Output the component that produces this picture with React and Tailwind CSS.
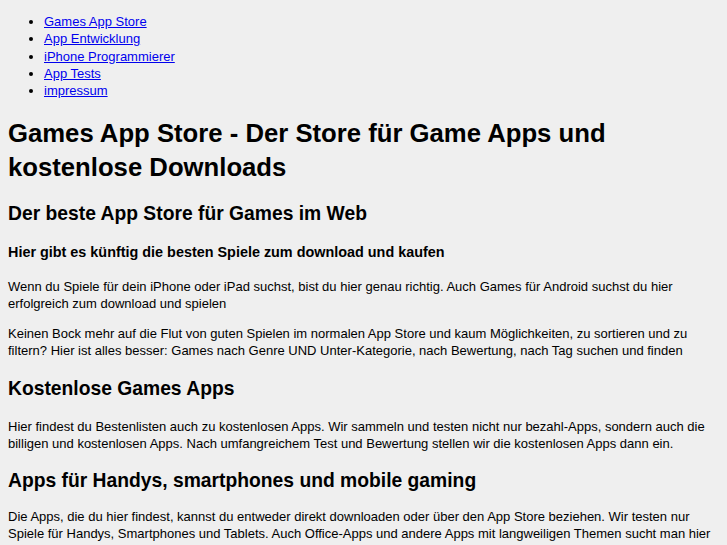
export default function App() {
  const links = [
    "Games App Store",
    "App Entwicklung",
    "iPhone Programmierer",
    "App Tests",
    "impressum",
  ];

  return (
    <div className="min-h-screen bg-[#efefef] p-2 text-[13px] leading-[17px] text-black font-['Liberation_Sans',Arial,sans-serif]">
      {/* Nav */}
      <ul className="mt-[5px] mb-[17px] list-disc pl-9 leading-[17.3px]">
        {links.map((l) => (
          <li key={l}>
            <a href="#" className="text-[#0000ee] underline">
              {l}
            </a>
          </li>
        ))}
      </ul>

      <h1 className="mb-[17px] text-[25.7px] leading-[34px] font-bold">
        Games App Store - Der Store für Game Apps und kostenlose Downloads
      </h1>

      <h2 className="mb-[15px] text-[19.3px] leading-[26px] font-bold">
        Der beste App Store für Games im Web
      </h2>

      <h3 className="mb-[16px] text-[14.4px] leading-[20px] font-bold">
        Hier gibt es künftig die besten Spiele zum download und kaufen
      </h3>

      <p className="mb-[13px]">
        Wenn du Spiele für dein iPhone oder iPad suchst, bist du hier genau
        richtig. Auch Games für Android suchst du hier erfolgreich zum download
        und spielen
      </p>
      <p className="mb-[17px]">
        Keinen Bock mehr auf die Flut von guten Spielen im normalen App Store
        und kaum Möglichkeiten, zu sortieren und zu filtern? Hier ist alles
        besser: Games nach Genre UND Unter-Kategorie, nach Bewertung, nach Tag
        suchen und finden
      </p>

      <h2 className="mb-[16px] text-[19.3px] leading-[26px] font-bold">Kostenlose Games Apps</h2>
      <p className="mb-[16px]">
        Hier findest du Bestenlisten auch zu kostenlosen Apps. Wir sammeln und
        testen nicht nur bezahl-Apps, sondern auch die billigen und kostenlosen
        Apps. Nach umfangreichem Test und Bewertung stellen wir die kostenlosen
        Apps dann ein.
      </p>

      <h2 className="mb-[14px] text-[19.3px] leading-[26px] font-bold">
        Apps für Handys, smartphones und mobile gaming
      </h2>
      <p className="mb-[13px]">
        Die Apps, die du hier findest, kannst du entweder direkt downloaden
        oder über den App Store beziehen. Wir testen nur Spiele für Handys,
        Smartphones und Tablets. Auch Office-Apps und andere Apps mit
        langweiligen Themen sucht man hier vergeblich.
      </p>
    </div>
  );
}
